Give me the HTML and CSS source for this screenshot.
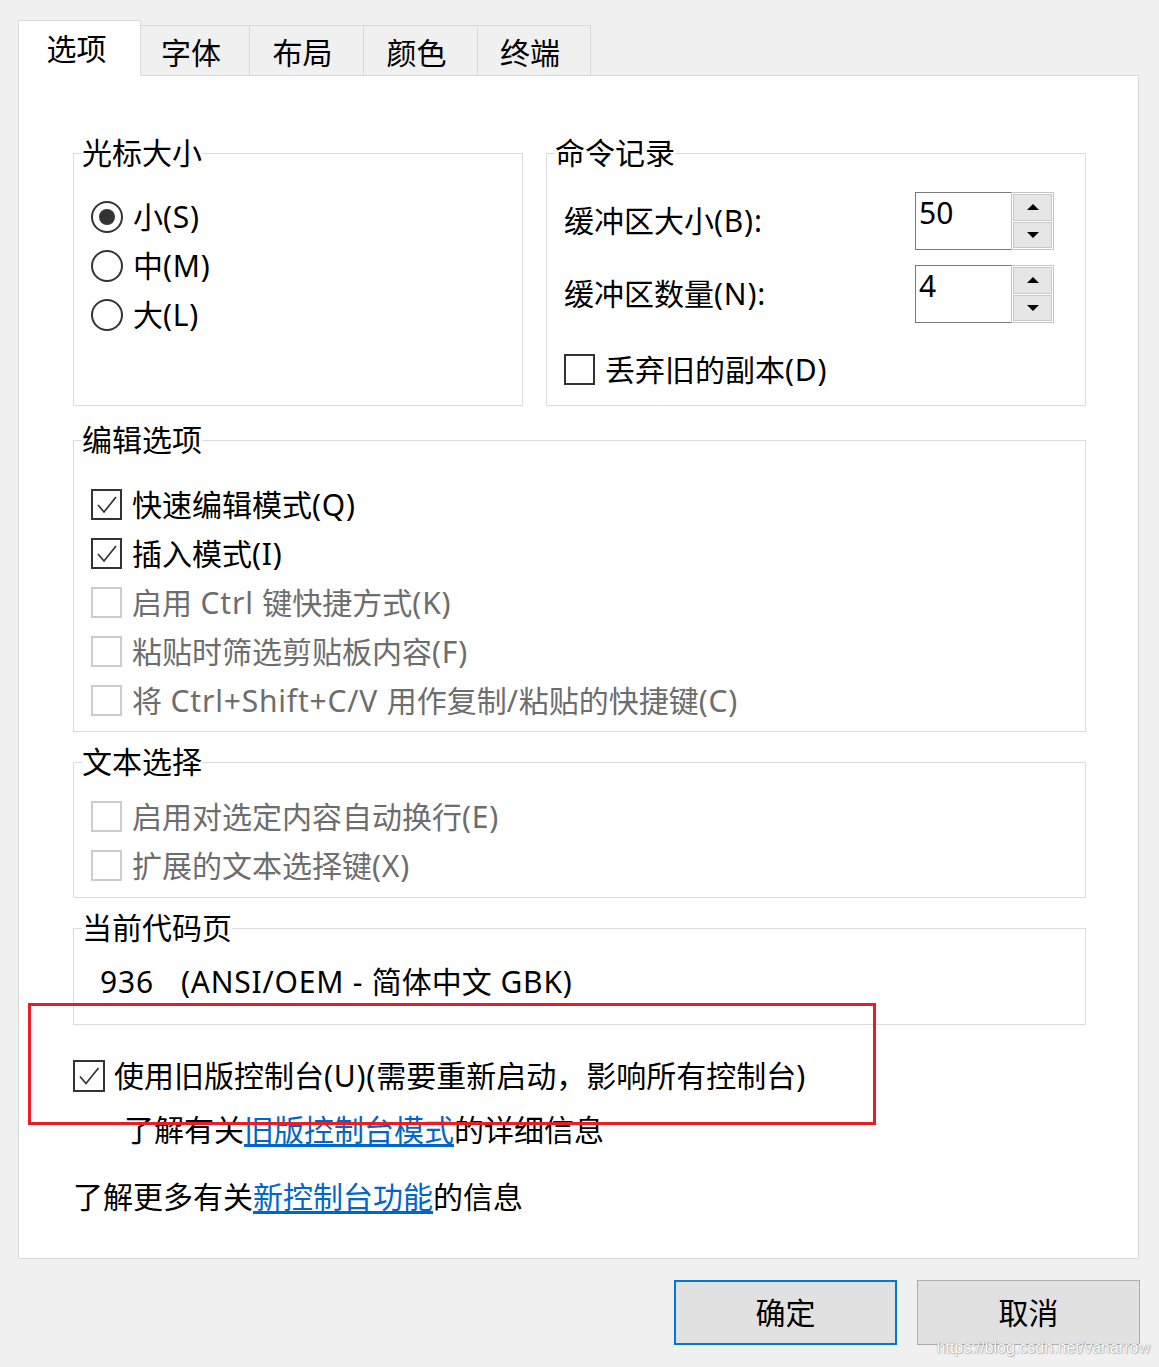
FILE: index.html
```html
<!DOCTYPE html>
<html lang="zh-CN">
<head>
<meta charset="utf-8">
<title>属性</title>
<link rel="stylesheet" href="styles.css">
</head>
<body>
<div class="tabs">
  <div class="tab active">选项</div>
  <div class="tab t2">字体</div>
  <div class="tab t3">布局</div>
  <div class="tab t4">颜色</div>
  <div class="tab t5">终端</div>
</div>
<div class="panel">
  <div class="row">
    <fieldset class="group cursor">
      <legend>光标大小</legend>
      <div class="opt"><span class="radio checked"></span><span>小<span class="en">(S)</span></span></div>
      <div class="opt"><span class="radio"></span><span>中<span class="en">(M)</span></span></div>
      <div class="opt"><span class="radio"></span><span>大<span class="en">(L)</span></span></div>
    </fieldset>
    <fieldset class="group history">
      <legend>命令记录</legend>
      <div class="spinrow">
        <span>缓冲区大小<span class="en">(B):</span></span>
        <div class="spin"><div class="spin-field">50</div><div class="spin-btns"><span class="sb"><i class="up"></i></span><span class="sb"><i class="down"></i></span></div></div>
      </div>
      <div class="spinrow second">
        <span>缓冲区数量<span class="en">(N):</span></span>
        <div class="spin"><div class="spin-field">4</div><div class="spin-btns"><span class="sb"><i class="up"></i></span><span class="sb"><i class="down"></i></span></div></div>
      </div>
      <div class="opt discard"><span class="cb"></span><span>丢弃旧的副本<span class="en">(D)</span></span></div>
    </fieldset>
  </div>

  <fieldset class="group edit">
    <legend>编辑选项</legend>
    <div class="opt"><span class="cb"><svg viewBox="0 0 31 31" width="31" height="31"><path d="M7 16 L13 23 L25 8" fill="none" stroke="#333" stroke-width="1.7"/></svg></span><span>快速编辑模式<span class="en">(Q)</span></span></div>
    <div class="opt"><span class="cb"><svg viewBox="0 0 31 31" width="31" height="31"><path d="M7 16 L13 23 L25 8" fill="none" stroke="#333" stroke-width="1.7"/></svg></span><span>插入模式<span class="en">(I)</span></span></div>
    <div class="opt disabled"><span class="cb"></span><span>启用<span class="en"> Ctrl </span>键快捷方式<span class="en">(K)</span></span></div>
    <div class="opt disabled"><span class="cb"></span><span>粘贴时筛选剪贴板内容<span class="en">(F)</span></span></div>
    <div class="opt disabled"><span class="cb"></span><span>将<span class="en"> Ctrl+Shift+C/V </span>用作复制<span class="en">/</span>粘贴的快捷键<span class="en">(C)</span></span></div>
  </fieldset>

  <fieldset class="group select">
    <legend>文本选择</legend>
    <div class="opt disabled"><span class="cb"></span><span>启用对选定内容自动换行<span class="en">(E)</span></span></div>
    <div class="opt disabled"><span class="cb"></span><span>扩展的文本选择键<span class="en">(X)</span></span></div>
  </fieldset>

  <fieldset class="group codepage">
    <legend>当前代码页</legend>
    <div class="cp"><span class="en">936</span><span class="cp-name"><span class="en">(ANSI/OEM - </span>简体中文<span class="en"> GBK)</span></span></div>
  </fieldset>

  <div class="opt legacy"><span class="cb"><svg viewBox="0 0 32 32" width="32" height="32"><path d="M7 16.5 L13 23.5 L25.5 8" fill="none" stroke="#333" stroke-width="1.7"/></svg></span><span>使用旧版控制台<span class="en">(U)(</span>需要重新启动，影响所有控制台<span class="en">)</span></span></div>
  <div class="info indent">了解有关<a href="#">旧版控制台模式</a>的详细信息</div>
  <div class="info more">了解更多有关<a href="#">新控制台功能</a>的信息</div>

  <div class="mark"></div>
</div>
<div class="buttons">
  <button class="btn ok">确定</button>
  <button class="btn">取消</button>
</div>
<div class="watermark">https://blog.csdn.net/vanarrow</div>
</body>
</html>
```
FILE: styles.css
```css
* { box-sizing: border-box; }
html, body { margin: 0; padding: 0; }
body {
  position: relative;
  width: 1159px;
  height: 1367px;
  overflow: hidden;
  background: #f0f0f0;
  color: #000;
  font-family: "Noto Sans", "Noto Sans CJK SC", sans-serif;
  font-size: 30px;
  line-height: 30px;
}
.en { letter-spacing: 0.8px; }

/* tabs */
.tabs {
  display: flex;
  align-items: flex-end;
  height: 55px;
  margin: 20px 0 0 18px;
}
.tab {
  height: 50px;
  display: flex;
  align-items: center;
  justify-content: center;
  padding: 5px 8px 0 0;
  background: #f0f0f0;
  border-top: 1px solid #d9d9d9;
  border-right: 1px solid #d9d9d9;
}
.tab.active {
  position: relative;
  z-index: 1;
  width: 123px;
  height: 56px;
  margin-bottom: -1px;
  padding: 0 6px 0 0;
  background: #fff;
  border: 1px solid #d9d9d9;
  border-bottom: none;
}
.t2 { width: 109px; }
.t3 { width: 114px; }
.t4 { width: 114px; }
.t5 { width: 113px; }

/* panel */
.panel {
  position: relative;
  width: 1121px;
  height: 1184px;
  margin-left: 18px;
  padding: 62px 52px 0 54px;
  background: #fff;
  border: 1px solid #d9d9d9;
}
.row {
  display: flex;
  gap: 23px;
}
.group {
  margin: 0;
  min-width: 0;
  border: 1px solid #dcdcdc;
  padding: 24px 31px 0 17px;
}
.group legend {
  height: 30px;
  margin-left: -9px;
  padding: 0;
  line-height: 30px;
}
.cursor { width: 450px; height: 268px; }
.history { flex: 1; }

.opt {
  display: flex;
  align-items: center;
  height: 49px;
  gap: 10px;
  white-space: nowrap;
}
.radio {
  position: relative;
  flex: none;
  width: 32px;
  height: 32px;
  border: 2px solid #333;
  border-radius: 50%;
  background: #fff;
}
.radio.checked::after {
  content: "";
  position: absolute;
  left: 6px;
  top: 6px;
  width: 16px;
  height: 16px;
  border-radius: 50%;
  background: #333;
}
.cb {
  flex: none;
  display: block;
  width: 31px;
  height: 31px;
  border: 2px solid #333;
  background: #fff;
}
.cb svg { display: block; margin: -2px 0 0 -2px; }
.disabled { color: #6d6d6d; }
.disabled .cb { border-color: #cccccc; }

/* spin boxes */
.spinrow {
  display: flex;
  align-items: center;
  justify-content: space-between;
  height: 58px;
}
.spinrow.second { margin-top: 15px; }
.spin {
  display: flex;
  width: 139px;
  height: 58px;
}
.spin-field {
  flex: 1;
  padding: 5px 0 0 3px;
  border: 1px solid #7a7a7a;
  border-right: none;
}
.spin-btns {
  display: flex;
  flex-direction: column;
  gap: 1px;
  width: 43px;
  padding: 1px;
  border: 1px solid #c4c4c4;
  background: #fff;
}
.sb {
  flex: 1;
  display: flex;
  align-items: center;
  justify-content: center;
  background: #e6e6e6;
  border: 1px solid #c9c9c9;
}
.sb i {
  width: 0;
  height: 0;
  border-left: 6px solid transparent;
  border-right: 6px solid transparent;
}
.sb .up { border-bottom: 6px solid #000; }
.sb .down { border-top: 6px solid #000; }
.discard { margin-top: 22px; }

.edit { margin-top: 19px; padding: 25px 17px 6px 17px; }
.select { margin-top: 15px; padding: 15px 17px 7px 17px; }
.codepage { margin-top: 15px; padding: 19px 17px 22px 26px; }
.codepage legend { margin-left: -18px; }
.cp {
  height: 40px;
  line-height: 40px;
  white-space: nowrap;
}
.cp-name { margin-left: 27px; }

.legacy { margin-top: 26px; gap: 9px; }
.legacy .cb { width: 32px; height: 32px; }
.info {
  height: 40px;
  line-height: 40px;
  white-space: nowrap;
}
.info a { color: #0066cc; text-decoration: underline; text-underline-offset: 3px; }
.indent { margin-top: 10px; padding-left: 51px; }
.more { margin-top: 27px; }

.mark {
  position: absolute;
  left: 9px;
  top: 927px;
  width: 848px;
  height: 122px;
  border: 3px solid #e81e25;
  pointer-events: none;
}

/* buttons */
.buttons {
  display: flex;
  justify-content: flex-end;
  gap: 20px;
  width: 1140px;
  margin-top: 21px;
}
.btn {
  width: 223px;
  height: 65px;
  margin: 0;
  padding: 0;
  font: inherit;
  color: #000;
  background: #e1e1e1;
  border: 1px solid #adadad;
}
.btn.ok { border: 2px solid #0078d7; }

.watermark {
  position: absolute;
  right: 9px;
  top: 1338px;
  font-family: "Liberation Sans", Arial, sans-serif;
  font-size: 16px;
  line-height: 20px;
  color: #ffffff;
  text-shadow: 0 0 1px rgba(0, 0, 0, 0.45), 1px 1px 1px rgba(0, 0, 0, 0.2);
}
```
